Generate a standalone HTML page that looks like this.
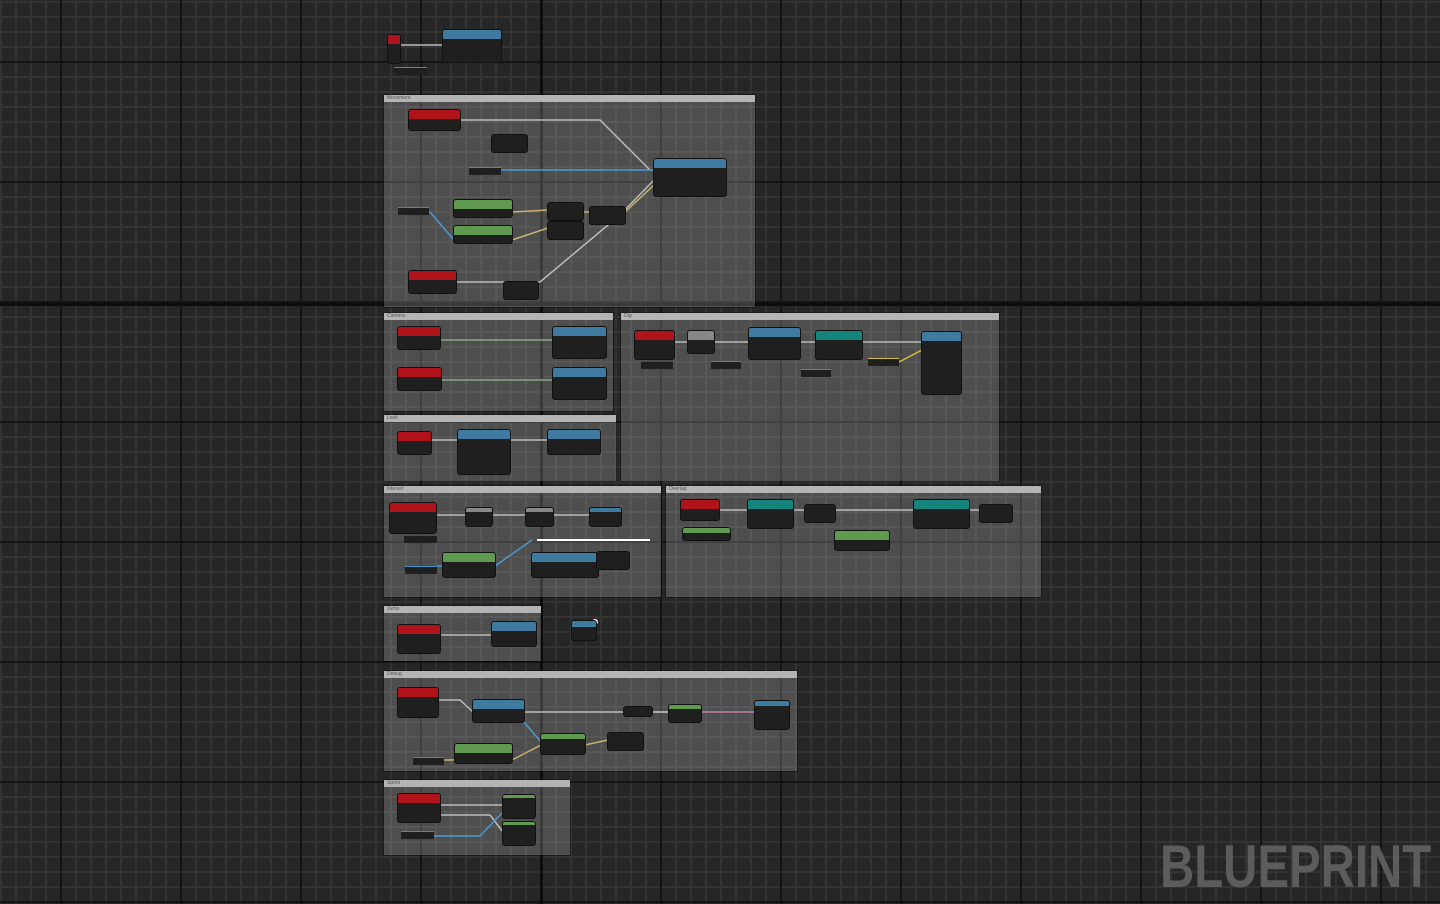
<!DOCTYPE html>
<html><head><meta charset="utf-8"><style>
html,body{margin:0;padding:0;width:1440px;height:904px;overflow:hidden;background:#262626;font-family:"Liberation Sans",sans-serif}
.grid{position:absolute;left:0;top:0;width:1440px;height:904px;
background-image:
linear-gradient(90deg,#141414 2px,transparent 2px),
linear-gradient(0deg,#141414 2px,transparent 2px),
linear-gradient(90deg,#333 2px,transparent 2px),
linear-gradient(0deg,#333 2px,transparent 2px);
background-size:120px 120px,120px 120px,15px 15px,15px 15px;
background-position:60px 0,0 63px,0 0,0 3px}
.maj{position:absolute;background:#0c0c0c}
.c{position:absolute;background:rgba(200,200,200,0.25);box-shadow:0 0 0 1px rgba(0,0,0,.3)}
.c .t{height:7px;background:#b4b4b4;font-size:5px;color:#555;padding-left:3px;line-height:7px}
.n{position:absolute;background:#1f1f1f;box-shadow:0 0 0 1px #111;border-radius:2px}
.n .h{height:9px;border-radius:2px 2px 0 0}
.r{background:#b0141a}.b{background:#3f7aa0}.g{background:#5f9a50}.te{background:#14847c}.gr{background:#888}
.v{position:absolute;height:7px;background:#1f1f1f;border-top:1px solid #3b8fc0}
.wm{position:absolute;left:1160px;top:832px;font-size:60px;font-weight:bold;color:#5c5c5c;transform:scaleX(.79);transform-origin:0 0;letter-spacing:0}
svg{position:absolute;left:0;top:0}
</style></head><body>
<div class="grid"></div>
<div class="maj" style="left:540px;top:0;width:3px;height:904px"></div>
<div class="maj" style="left:0;top:303px;width:1440px;height:3px"></div>

<div class="c" style="left:384px;top:95px;width:371px;height:212px"><div class="t">Movement</div></div>
<div class="c" style="left:384px;top:313px;width:229px;height:98px"><div class="t">Camera</div></div>
<div class="c" style="left:621px;top:313px;width:378px;height:168px"><div class="t">Dig</div></div>
<div class="c" style="left:384px;top:415px;width:232px;height:66px"><div class="t">Look</div></div>
<div class="c" style="left:384px;top:486px;width:277px;height:111px"><div class="t">Interact</div></div>
<div class="c" style="left:666px;top:486px;width:375px;height:111px"><div class="t">Overlap</div></div>
<div class="c" style="left:384px;top:606px;width:157px;height:55px"><div class="t">Jump</div></div>
<div class="c" style="left:384px;top:671px;width:413px;height:100px"><div class="t">Debug</div></div>
<div class="c" style="left:384px;top:780px;width:186px;height:75px"><div class="t">Sprint</div></div>

<svg width="1440" height="904">
<g fill="none" stroke-width="1.5">
<path d="M460 120 L600 120 L650 170" stroke="#bbb"/>
<path d="M456 282 L540 282 L620 215 L654 180" stroke="#bbb"/>
<path d="M501 170 L654 170" stroke="#4a9ad0"/>
<path d="M429 211 L454 240" stroke="#4a9ad0"/>
<path d="M512 212 L548 210 M512 240 L548 228 M583 212 L590 212 M625 212 L654 185" stroke="#c8b070"/>
<path d="M440 340 L553 340 M441 380 L553 380" stroke="#8a8"/>
<path d="M674 342 L688 342 M714 342 L749 342 M800 342 L816 342 M862 342 L922 342" stroke="#bbb"/>
<path d="M899 362 L922 350" stroke="#d8c040"/>
<path d="M431 440 L458 440 M510 440 L548 440" stroke="#bbb"/>
<path d="M537 540 L650 540" stroke="#fff" stroke-width="2"/>
<path d="M436 515 L466 515 M492 515 L526 515 M553 515 L590 515" stroke="#bbb"/>
<path d="M437 566 L443 566 M495 566 L532 540" stroke="#4a9ad0"/>
<path d="M719 510 L748 510 M793 510 L805 510 M835 510 L914 510 M969 510 L980 510" stroke="#bbb"/>
<path d="M440 635 L492 635" stroke="#bbb"/>
<path d="M438 700 L460 700 L473 712 M524 712 L624 712" stroke="#bbb"/>
<path d="M652 712 L669 712" stroke="#ccc"/>
<path d="M701 712 L755 712" stroke="#c080b0"/>
<path d="M444 760 L455 760 M512 760 L541 745 M585 745 L608 740" stroke="#c8b070"/>
<path d="M524 722 L541 742" stroke="#4a9ad0"/>
<path d="M440 805 L503 805 M440 815 L490 815 L503 832" stroke="#bbb"/>
<path d="M434 836 L480 836 L503 812" stroke="#4a9ad0"/>
<path d="M399 45 L443 45" stroke="#bbb"/>
</g>
<circle cx="595" cy="622" r="3" fill="#fff"/>
</svg>

<div class="n" style="left:388px;top:35px;width:12px;height:28px"><div class="h r"></div></div>
<div class="n" style="left:443px;top:30px;width:58px;height:32px"><div class="h b"></div></div>
<div class="v" style="left:394px;top:67px;width:33px"></div>

<div class="n" style="left:409px;top:110px;width:51px;height:20px"><div class="h r"></div></div>
<div class="n" style="left:492px;top:135px;width:35px;height:17px"></div>
<div class="v" style="left:469px;top:167px;width:32px"></div>
<div class="n" style="left:654px;top:159px;width:72px;height:37px"><div class="h b"></div></div>
<div class="v" style="left:398px;top:207px;width:31px"></div>
<div class="n" style="left:454px;top:200px;width:58px;height:17px"><div class="h g"></div></div>
<div class="n" style="left:454px;top:226px;width:58px;height:17px"><div class="h g"></div></div>
<div class="n" style="left:548px;top:203px;width:35px;height:17px"></div>
<div class="n" style="left:548px;top:222px;width:35px;height:17px"></div>
<div class="n" style="left:590px;top:207px;width:35px;height:17px"></div>
<div class="n" style="left:409px;top:271px;width:47px;height:22px"><div class="h r"></div></div>
<div class="n" style="left:504px;top:282px;width:34px;height:17px"></div>

<div class="n" style="left:398px;top:327px;width:42px;height:22px"><div class="h r"></div></div>
<div class="n" style="left:553px;top:327px;width:53px;height:31px"><div class="h b"></div></div>
<div class="n" style="left:398px;top:368px;width:43px;height:22px"><div class="h r"></div></div>
<div class="n" style="left:553px;top:368px;width:53px;height:31px"><div class="h b"></div></div>

<div class="n" style="left:635px;top:331px;width:39px;height:28px"><div class="h r"></div></div>
<div class="v" style="left:641px;top:361px;width:32px;border-top-color:#a22"></div>
<div class="n" style="left:688px;top:331px;width:26px;height:22px"><div class="h gr"></div></div>
<div class="v" style="left:711px;top:361px;width:30px"></div>
<div class="n" style="left:749px;top:328px;width:51px;height:31px"><div class="h b"></div></div>
<div class="v" style="left:801px;top:369px;width:30px"></div>
<div class="n" style="left:816px;top:331px;width:46px;height:28px"><div class="h te"></div></div>
<div class="v" style="left:868px;top:358px;width:31px;border-top-color:#d8c040"></div>
<div class="n" style="left:922px;top:332px;width:39px;height:62px"><div class="h b"></div></div>

<div class="n" style="left:398px;top:432px;width:33px;height:22px"><div class="h r"></div></div>
<div class="n" style="left:458px;top:430px;width:52px;height:44px"><div class="h b"></div></div>
<div class="n" style="left:548px;top:430px;width:52px;height:24px"><div class="h b"></div></div>

<div class="n" style="left:390px;top:503px;width:46px;height:30px"><div class="h r"></div></div>
<div class="v" style="left:404px;top:535px;width:33px;border-top-color:#a22"></div>
<div class="n" style="left:466px;top:508px;width:26px;height:18px"><div class="h gr" style="height:4px"></div></div>
<div class="n" style="left:526px;top:508px;width:27px;height:18px"><div class="h gr" style="height:4px"></div></div>
<div class="n" style="left:590px;top:508px;width:31px;height:18px"><div class="h b" style="height:4px"></div></div>
<div class="v" style="left:405px;top:566px;width:32px"></div>
<div class="n" style="left:443px;top:553px;width:52px;height:24px"><div class="h g"></div></div>
<div class="n" style="left:532px;top:553px;width:66px;height:24px"><div class="h b"></div></div>
<div class="n" style="left:597px;top:552px;width:32px;height:17px"></div>

<div class="n" style="left:681px;top:500px;width:38px;height:20px"><div class="h r"></div></div>
<div class="n" style="left:748px;top:500px;width:45px;height:28px"><div class="h te"></div></div>
<div class="n" style="left:805px;top:505px;width:30px;height:17px"></div>
<div class="n" style="left:683px;top:528px;width:47px;height:12px"><div class="h g" style="height:5px"></div></div>
<div class="n" style="left:835px;top:531px;width:54px;height:19px"><div class="h g"></div></div>
<div class="n" style="left:914px;top:500px;width:55px;height:28px"><div class="h te"></div></div>
<div class="n" style="left:980px;top:505px;width:32px;height:17px"></div>

<div class="n" style="left:572px;top:621px;width:24px;height:19px"><div class="h b" style="height:6px"></div></div>

<div class="n" style="left:398px;top:625px;width:42px;height:28px"><div class="h r"></div></div>
<div class="n" style="left:492px;top:622px;width:44px;height:24px"><div class="h b"></div></div>

<div class="n" style="left:398px;top:688px;width:40px;height:29px"><div class="h r"></div></div>
<div class="n" style="left:473px;top:700px;width:51px;height:22px"><div class="h b"></div></div>
<div class="v" style="left:413px;top:757px;width:31px"></div>
<div class="n" style="left:455px;top:744px;width:57px;height:19px"><div class="h g"></div></div>
<div class="n" style="left:541px;top:734px;width:44px;height:20px"><div class="h g" style="height:5px"></div></div>
<div class="n" style="left:624px;top:707px;width:28px;height:9px"></div>
<div class="n" style="left:669px;top:705px;width:32px;height:17px"><div class="h g" style="height:4px"></div></div>
<div class="n" style="left:608px;top:733px;width:35px;height:17px"></div>
<div class="n" style="left:755px;top:701px;width:34px;height:28px"><div class="h b" style="height:5px"></div></div>

<div class="n" style="left:398px;top:794px;width:42px;height:28px"><div class="h r"></div></div>
<div class="n" style="left:503px;top:795px;width:32px;height:23px"><div class="h g" style="height:3px"></div></div>
<div class="n" style="left:503px;top:822px;width:32px;height:23px"><div class="h g" style="height:3px"></div></div>
<div class="v" style="left:401px;top:831px;width:33px"></div>

<div class="wm">BLUEPRINT</div>
</body></html>
